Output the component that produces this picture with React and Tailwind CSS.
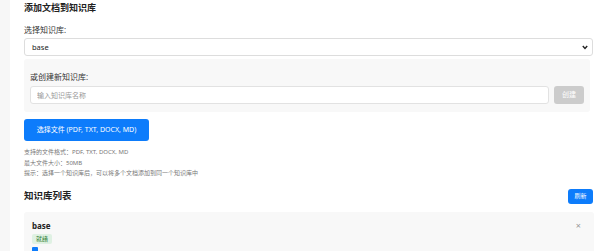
import React, { useState } from 'react';

const FONT = { fontFamily: '"Noto Sans", "Noto Sans CJK SC", sans-serif' };

export default function App() {
  const [kb, setKb] = useState('base');
  const [newName, setNewName] = useState('');

  return (
    <div className="min-h-screen bg-[#f7f7f7] pl-[10px] text-[8px] leading-[10px] text-[#222]" style={FONT}>
      <div className="min-h-[251px] overflow-hidden bg-white pl-[14px] pr-[6px]">
        {/* upload section */}
        <div className="pt-[2px] text-[9px] font-bold leading-[12px] text-[#222]">添加文档到知识库</div>

        <div className="mt-[10px] text-[8px] leading-[11px] text-[#333]">选择知识库:</div>
        <div className="relative mr-[1px] mt-[3px]">
          <select
            value={kb}
            onChange={e => setKb(e.target.value)}
            className="block h-[18px] w-full appearance-none rounded-[3px] border border-[#dddddd] bg-white pl-[7px] text-[7.5px] text-[#222] outline-none"
          >
            <option value="base">base</option>
          </select>
          <svg className="pointer-events-none absolute right-[5px] top-[7px]" width="6" height="5" viewBox="0 0 6 5">
            <path d="M0.8 1 L3 3.4 L5.2 1" fill="none" stroke="#222" strokeWidth="1.4" />
          </svg>
        </div>

        <div className="mr-[4px] mt-[3px] rounded-[3px] bg-[#f8f8f8] px-[6px] pb-[8px] pt-[12px]">
          <div className="text-[8px] leading-[11px] text-[#333]">或创建新知识库:</div>
          <div className="mt-[4px] flex items-center gap-[5px]">
            <input
              value={newName}
              onChange={e => setNewName(e.target.value)}
              placeholder="输入知识库名称"
              className="block h-[18px] flex-1 rounded-[3px] border border-[#e2e2e2] bg-white px-[6px] text-[7px] text-[#333] outline-none placeholder:text-[#999]"
            />
            <button
              disabled
              className="block h-[18px] w-[30px] rounded-[3px] bg-[#cccccc] text-[7px] leading-[18px] text-white"
            >
              创建
            </button>
          </div>
        </div>

        <button className="mt-[7px] flex h-[22px] w-[125px] items-center justify-center rounded-[3px] bg-[#0d7cfb] text-[7px] font-normal text-white">
          选择文件 (PDF, TXT, DOCX, MD)
        </button>

        <div className="mt-[6px] text-[6px] leading-[10.5px] text-[#777]">
          <div>支持的文件格式：PDF, TXT, DOCX, MD</div>
          <div>最大文件大小：50MB</div>
          <div>提示：选择一个知识库后，可以将多个文档添加到同一个知识库中</div>
        </div>

        {/* list section */}
        <div className="mr-[1px] mt-[10px] flex h-[15px] items-center justify-between">
          <div className="text-[9.5px] font-bold leading-[12px] text-[#222]">知识库列表</div>
          <button className="block h-[15px] w-[25px] rounded-[3px] bg-[#0d7cfb] text-[6px] leading-[15px] text-white">刷新</button>
        </div>

        <div className="mt-[8px] rounded-[3px] bg-[#f8f8f8] pl-[8px] pr-[13px] pt-[9px] pb-[6px]">
          <div className="flex items-start justify-between">
            <div>
              <div className="text-[8px] font-bold leading-[10px] text-[#222]">base</div>
              <div className="mt-[3px] inline-block rounded-[2px] bg-[#dff1e3] px-[4px] align-top text-[6px] leading-[10px] text-[#2e7d32]">就绪</div>
            </div>
            <div className="text-[9px] leading-[10px] text-[#999]">×</div>
          </div>
          <div className="mt-[3px] h-[6px] w-[6px] rounded-[1px] bg-[#0d7cfb]" />
        </div>
      </div>
    </div>
  );
}
